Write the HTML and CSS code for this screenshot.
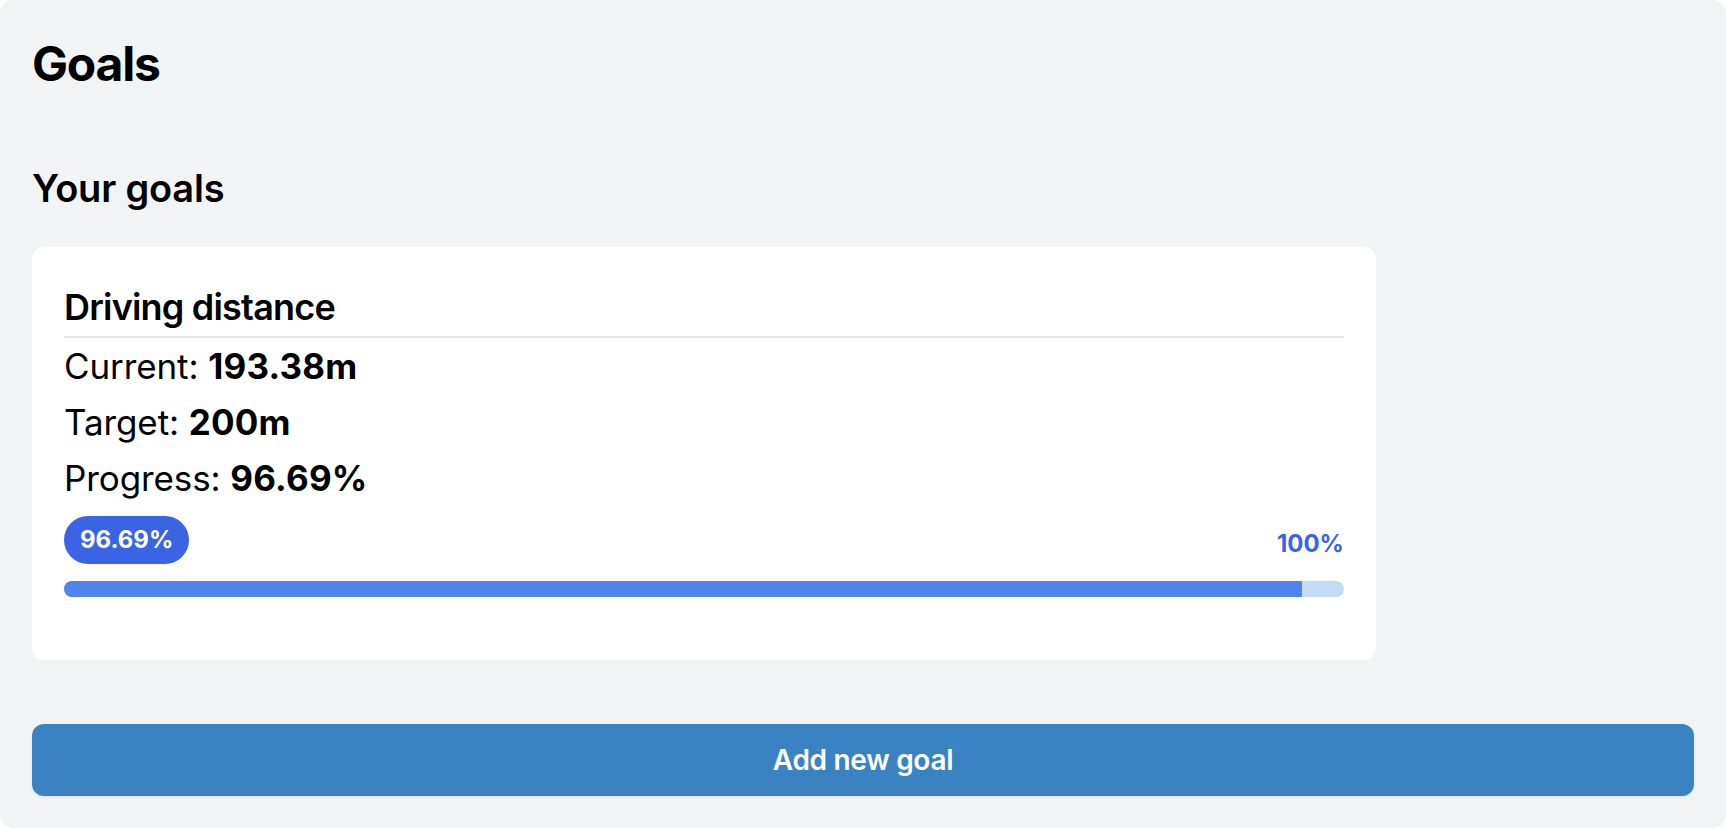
FILE: index.html
```html
<!DOCTYPE html>
<html lang="en">
<head>
<meta charset="utf-8">
<title>Goals</title>
<link rel="stylesheet" href="styles.css">
</head>
<body>
<main class="page">
  <h1 class="page-title">Goals</h1>
  <h2 class="section-title">Your goals</h2>
  <section class="goal-card">
    <h3 class="goal-name">Driving distance</h3>
    <p class="goal-stat">Current: <strong>193.38m</strong></p>
    <p class="goal-stat">Target: <strong>200m</strong></p>
    <p class="goal-stat">Progress: <strong>96.69%</strong></p>
    <div class="progress-labels">
      <span class="progress-badge">96.69%</span>
      <span class="progress-max">100%</span>
    </div>
    <div class="progress-track">
      <div class="progress-fill" style="width: 96.69%"></div>
    </div>
  </section>
  <button class="add-button" type="button">Add new goal</button>
</main>
</body>
</html>
```

FILE: styles.css
```css
* {
  box-sizing: border-box;
}

html, body {
  margin: 0;
  padding: 0;
  background: #ffffff;
}

body {
  font-family: Inter, "Noto Sans", sans-serif;
  color: #000000;
}

.page {
  min-height: 828px;
  background: #f2f3f5;
  border-radius: 14px;
  padding: 32px 32px 31px;
  display: flex;
  flex-direction: column;
}

.page-title {
  margin: 0;
  font-size: 48px;
  line-height: 64px;
  font-weight: 700;
  letter-spacing: -1.2px;
}

.section-title {
  margin: 68px 0 0;
  font-size: 38px;
  line-height: 48px;
  font-weight: 600;
  letter-spacing: -0.2px;
}

.goal-card {
  margin-top: 35px;
  width: 1344px;
  background: #ffffff;
  border-radius: 12px;
  padding: 32px 32px 63px;
}

.goal-name {
  margin: 0;
  font-size: 36px;
  line-height: 57px;
  font-weight: 600;
  letter-spacing: -0.8px;
  border-bottom: 2px solid #e3e5e9;
}

.goal-stat {
  margin: 0;
  font-size: 35px;
  line-height: 56px;
  font-weight: 400;
  letter-spacing: -0.1px;
}

.goal-stat strong {
  font-weight: 700;
  letter-spacing: 0.2px;
}

.progress-labels {
  margin-top: 10px;
  display: flex;
  justify-content: space-between;
  align-items: flex-end;
}

.progress-badge {
  height: 48px;
  padding: 0 16px;
  border-radius: 24px;
  background: #3a64e3;
  color: #ffffff;
  font-size: 24px;
  font-weight: 700;
  line-height: 48px;
}

.progress-max {
  color: #3a64e3;
  font-size: 24px;
  font-weight: 700;
  line-height: 40px;
}

.progress-track {
  margin-top: 17px;
  height: 16px;
  border-radius: 8px;
  background: #c4dbf8;
  overflow: hidden;
}

.progress-fill {
  height: 100%;
  background: #5083ec;
}

.add-button {
  margin-top: 64px;
  height: 72px;
  width: 100%;
  border: none;
  border-radius: 12px;
  background: #3983c2;
  color: #ffffff;
  font-family: Inter, "Noto Sans", sans-serif;
  font-size: 28px;
  font-weight: 600;
  letter-spacing: -0.3px;
  box-shadow: 0 1px 3px rgba(0, 0, 0, 0.08);
}
```
